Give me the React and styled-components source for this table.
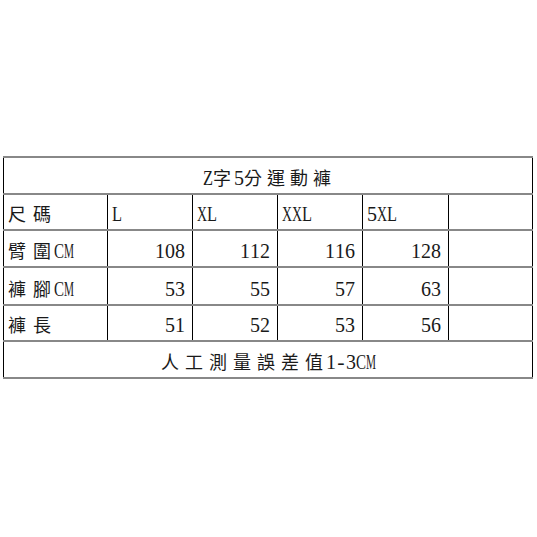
import React from 'react';
import styled, { createGlobalStyle } from 'styled-components';

const GlobalStyle = createGlobalStyle`
  html, body {
    margin: 0;
    background: #fff;
  }
`;

const Page = styled.div`
  width: 537px;
  height: 537px;
  padding: 156px 0 0 3px;
  box-sizing: border-box;
  background: #fff;
`;

const Sheet = styled.table`
  border-collapse: collapse;
  table-layout: fixed;
  width: 529px;
  color: #1a1a1a;
  font-family: "Liberation Serif", "Noto Sans CJK TC", serif;
  font-size: 22px;
  line-height: 22px;
`;

const Col = styled.col`
  width: ${(p) => p.$w}px;
`;

const Cell = styled.td`
  box-sizing: border-box;
  border-top: 2px solid #888;
  border-bottom: 2px solid #888;
  border-left: 1px solid #000;
  border-right: 1px solid #000;
  height: ${(p) => p.$h || 36}px;
  padding: 0 ${(p) => (p.$align === 'right' ? 7 : 3)}px 4px ${(p) => (p.$align === 'right' ? 3 : 4)}px;
  text-align: ${(p) => p.$align || 'left'};
  vertical-align: bottom;
  white-space: nowrap;
`;

const Half = styled.span`
  display: inline-flex;
  justify-content: center;
  width: 10px;
  transform: scaleX(${(p) => p.$s});
`;

const Han = styled.span`
  display: inline-block;
  font-family: "Noto Sans CJK TC", "Noto Sans CJK SC", sans-serif;
  font-size: 18px;
  line-height: 22px;
  margin-right: ${(p) => p.$gap}px;
`;

const ADV = { C: 0.667, M: 0.889, X: 0.722, L: 0.611, Z: 0.611, '-': 0.333 };
const scaleFor = (ch) => Math.min(1, 10 / ((ADV[ch] ?? 0.5) * 22));
const isHan = (ch) => ch && ch.charCodeAt(0) > 0x2e80;

// CJK chars spaced out, latin chars squeezed into half-width cells
const Txt = ({ children, gap = 7 }) => {
  const chars = [...children];
  return (
    <>
      {chars.map((ch, i) =>
        isHan(ch) ? (
          <Han key={i} $gap={isHan(chars[i + 1]) ? gap : 3}>
            {ch}
          </Han>
        ) : (
          <Half key={i} $s={scaleFor(ch)}>
            {ch}
          </Half>
        )
      )}
    </>
  );
};

const widths = [104, 85, 85, 85, 86, 84];
const sizes = ['L', 'XL', 'XXL', '5XL', ''];

const rows = [
  { label: '臂圍CM', vals: ['108', '112', '116', '128', ''], h: 37 },
  { label: '褲腳CM', vals: ['53', '55', '57', '63', ''], h: 38 },
  { label: '褲長', vals: ['51', '52', '53', '56', ''], h: 36 },
];

export default function App() {
  return (
    <Page>
      <GlobalStyle />
      <Sheet>
        <colgroup>
          {widths.map((w, i) => (
            <Col key={i} $w={w} />
          ))}
        </colgroup>
        <tbody>
          <tr>
            <Cell colSpan={6} $align="center" $h={37}>
              <Txt gap={5}>Z字5分運動褲</Txt>
            </Cell>
          </tr>
          <tr>
            <Cell $h={36}>
              <Txt>尺碼</Txt>
            </Cell>
            {sizes.map((s, i) => (
              <Cell key={i} $h={36}>
                <Txt>{s}</Txt>
              </Cell>
            ))}
          </tr>
          {rows.map((r) => (
            <tr key={r.label}>
              <Cell $h={r.h}>
                <Txt>{r.label}</Txt>
              </Cell>
              {r.vals.map((v, i) => (
                <Cell key={i} $align="right" $h={r.h}>
                  <Txt>{v}</Txt>
                </Cell>
              ))}
            </tr>
          ))}
          <tr>
            <Cell colSpan={6} $align="center" $h={37}>
              <Txt gap={6}>人工測量誤差值1-3CM</Txt>
            </Cell>
          </tr>
        </tbody>
      </Sheet>
    </Page>
  );
}
